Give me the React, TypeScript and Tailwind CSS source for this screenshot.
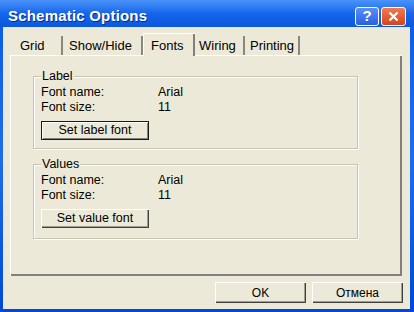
import React from "react";

// Windows XP style "Schematic Options" dialog

const tabs = [
  { label: "Grid", w: "w-[51px]", pl: "pl-[8px]" },
  { label: "Show/Hide", w: "w-[80px]", pl: "pl-[6px]" },
  { label: "Fonts", w: "w-[52px]", pl: "pl-[7px]", active: true },
  { label: "Wiring", w: "w-[50px]", pl: "pl-[4px]" },
  { label: "Printing", w: "w-[55px]", pl: "pl-[5px]" },
];

function FontGroup({
  title,
  button,
  isDefault,
  h,
}: {
  title: string;
  button: string;
  isDefault?: boolean;
  h: string;
}) {
  return (
    <div
      className={`relative ${h} w-[325px] border border-[#C7C4B4] shadow-[1px_1px_0_#fff,inset_1px_1px_0_#fff]`}
    >
      <span className="absolute -top-[8px] left-[7px] bg-[#ECE9D8] px-[1px] leading-[14px]">
        {title}
      </span>
      <div className="pt-[8px] pl-[7px]">
        <div className="flex h-[15px] items-center">
          <span className="w-[117px]">Font name:</span>
          <span>Arial</span>
        </div>
        <div className="flex h-[15px] items-center">
          <span className="w-[117px]">Font size:</span>
          <span>11</span>
        </div>
        <button
          className={`mt-[6px] flex h-[19px] w-[108px] items-center justify-center bg-[#ECE9D8] ${
            isDefault
              ? "border border-[#1a1a1a] shadow-[inset_1px_1px_0_#fff,inset_-1px_-1px_0_#808080]"
              : "shadow-[inset_1px_1px_0_#fff,inset_-1px_-1px_0_#404040,inset_-2px_-2px_0_#a09e90]"
          }`}
        >
          {button}
        </button>
      </div>
    </div>
  );
}

export default function App() {
  return (
    <div className="flex h-[312px] w-[414px] flex-col bg-gradient-to-b from-[#0A5AE6] via-[#1F6CF0] to-[#0048D8] font-['Liberation_Sans',Arial,sans-serif]">
      {/* Title bar */}
      <div className="flex h-[27px] items-center bg-gradient-to-b from-[#4A93FA] via-[#1565EA] to-[#0A58DE] pl-[8px] pr-[8px] pt-[5px]">
        <span className="text-[15px] font-bold tracking-[0.2px] text-white [text-shadow:1px_1px_0_#0a2a80]">
          Schematic Options
        </span>
        <div className="ml-auto flex gap-[2px]">
          <div className="flex h-[19px] w-[24px] items-center justify-center rounded-[3px] border border-white bg-gradient-to-b from-[#5A8EF8] to-[#2A5FE0] text-[15px] font-bold text-white">
            ?
          </div>
          <div className="flex h-[19px] w-[25px] items-center justify-center rounded-[3px] border border-white bg-gradient-to-b from-[#F07A50] to-[#D5421C]">
            <svg width="11" height="11" viewBox="0 0 11 11">
              <path d="M1.5 1.5 L9.5 9.5 M9.5 1.5 L1.5 9.5" stroke="#fff" strokeWidth="2.2" />
            </svg>
          </div>
        </div>
      </div>

      {/* Client area */}
      <div className="mb-[3px] ml-[3px] mr-[4px] flex flex-1 flex-col bg-[#ECE9D8] px-[7px] pt-[6px] text-[12.5px] text-black">
        {/* Tabs */}
        <div className="flex h-[22px] items-end pl-[2px] pr-[1px]">
          {tabs.map((t) =>
            t.active ? (
              <div
                key={t.label}
                className={`relative z-10 -mb-[1px] flex h-[23px] ${t.w} ${t.pl} items-start border-l border-t border-white bg-[#ECE9D8] pt-[2px] text-[13px] shadow-[inset_-2px_0_0_#808080]`}
              >
                {t.label}
              </div>
            ) : (
              <div
                key={t.label}
                className={`flex h-[19px] ${t.w} ${t.pl} items-center border-r-2 border-[#8A887E] pt-[1px] text-[13px]`}
              >
                {t.label}
              </div>
            )
          )}
        </div>

        {/* Panel */}
        <div className="mr-[1px] flex h-[221px] flex-col gap-[15px] border-l border-t border-white pl-[22px] pt-[20px] shadow-[inset_-2px_-2px_0_#808080,inset_-1px_-1px_0_#404040]">
          <FontGroup title="Label" button="Set label font" isDefault h="h-[73px]" />
          <FontGroup title="Values" button="Set value font" h="h-[75px]" />
        </div>

        {/* Bottom buttons */}
        <div className="mt-[6px] flex justify-end gap-[6px]">
          <button className="h-[21px] w-[91px] bg-[#ECE9D8] text-[12px] shadow-[inset_1px_1px_0_#fff,inset_-1px_-1px_0_#404040,inset_-2px_-2px_0_#a09e90]">
            OK
          </button>
          <button className="h-[21px] w-[91px] bg-[#ECE9D8] text-[12px] shadow-[inset_1px_1px_0_#fff,inset_-1px_-1px_0_#404040,inset_-2px_-2px_0_#a09e90]">
            Отмена
          </button>
        </div>
      </div>
    </div>
  );
}
